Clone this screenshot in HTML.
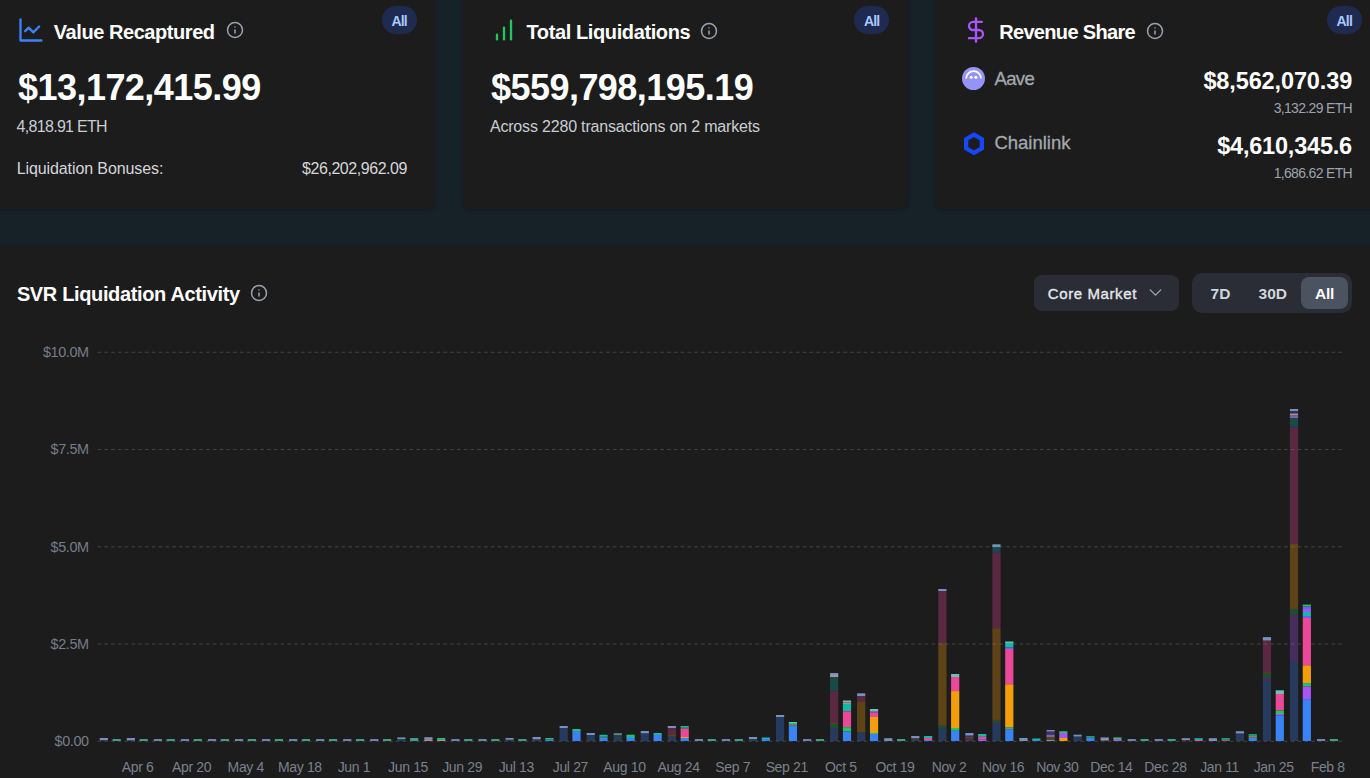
<!DOCTYPE html>
<html><head><meta charset="utf-8"><style>
html,body{margin:0;padding:0;}
body{width:1370px;height:778px;overflow:hidden;position:relative;background:#172228;font-family:"Liberation Sans", sans-serif;}
.abs{position:absolute;display:block;}
.t{position:absolute;white-space:nowrap;line-height:1;}
#cm{-webkit-text-stroke:0.35px #e5e7eb;}
#aave,#link{-webkit-text-stroke:0.3px #a3a8b0;}
.card{position:absolute;background:#1c1c1c;border-radius:8px;box-shadow:0 1px 4px rgba(0,0,0,0.28);}
.badge{position:absolute;background:#1e2a50;border-radius:14px;}
</style></head><body>
<div class="card" style="left:-10.2px;top:-20px;width:445px;height:228.5px"></div>
<div class="card" style="left:462.5px;top:-20px;width:445px;height:228.5px"></div>
<div class="card" style="left:935.3px;top:-20px;width:445px;height:228.5px"></div>
<div class="card" style="left:-11px;top:245px;width:1392px;height:560px;border-radius:8px"></div>
<div class="badge" style="left:381.5px;top:5.8px;width:35.4px;height:28px"></div>
<div class="badge" style="left:854px;top:5.8px;width:35.4px;height:28px"></div>
<div class="badge" style="left:1326.6px;top:5.8px;width:35.4px;height:28px"></div>
<div class="abs" style="left:1034px;top:275px;width:145px;height:36px;background:#2a2d35;border-radius:8px"></div>
<div class="abs" style="left:1192.2px;top:272.6px;width:160.3px;height:40.4px;background:#2a2d35;border-radius:10px"></div>
<div class="abs" style="left:1301px;top:276.8px;width:46.7px;height:32.2px;background:#4b5260;border-radius:8px"></div>
<svg class="abs" style="left:0;top:0" width="1370" height="778" viewBox="0 0 1370 778"><line x1="97.6" x2="1342" y1="352.25" y2="352.25" stroke="#434343" stroke-width="1" stroke-dasharray="3.6 3.18"/><line x1="97.6" x2="1342" y1="449.5" y2="449.5" stroke="#434343" stroke-width="1" stroke-dasharray="3.6 3.18"/><line x1="97.6" x2="1342" y1="546.75" y2="546.75" stroke="#434343" stroke-width="1" stroke-dasharray="3.6 3.18"/><line x1="97.6" x2="1342" y1="644.0" y2="644.0" stroke="#434343" stroke-width="1" stroke-dasharray="3.6 3.18"/><line x1="97.6" x2="1342" y1="741.25" y2="741.25" stroke="#434343" stroke-width="1" stroke-dasharray="3.6 3.18"/><rect x="99.71" y="738.00" width="8.20" height="2.00" fill="#7591c0"/><rect x="99.71" y="740.00" width="8.20" height="1.00" fill="#a855f7" fill-opacity="0.3"/><rect x="112.54" y="739.00" width="8.20" height="2.00" fill="#3c9f86"/><rect x="126.76" y="738.00" width="8.20" height="2.30" fill="#7591c0"/><rect x="126.76" y="740.30" width="8.20" height="0.70" fill="#a855f7" fill-opacity="0.3"/><rect x="139.59" y="739.00" width="8.20" height="2.00" fill="#3c9f86"/><rect x="153.81" y="739.00" width="8.20" height="2.00" fill="#6a84ae"/><rect x="166.64" y="739.00" width="8.20" height="2.00" fill="#3c9f86"/><rect x="180.86" y="739.00" width="8.20" height="2.00" fill="#6a84ae"/><rect x="193.69" y="739.00" width="8.20" height="2.00" fill="#3c9f86"/><rect x="207.91" y="739.00" width="8.20" height="2.00" fill="#6a84ae"/><rect x="220.74" y="739.00" width="8.20" height="2.00" fill="#3c9f86"/><rect x="234.96" y="739.00" width="8.20" height="2.00" fill="#6a84ae"/><rect x="247.79" y="739.00" width="8.20" height="2.00" fill="#3c9f86"/><rect x="262.01" y="739.00" width="8.20" height="2.00" fill="#6a84ae"/><rect x="274.84" y="739.00" width="8.20" height="2.00" fill="#3c9f86"/><rect x="289.06" y="739.00" width="8.20" height="2.00" fill="#6a84ae"/><rect x="301.89" y="739.00" width="8.20" height="2.00" fill="#3c9f86"/><rect x="316.11" y="739.00" width="8.20" height="2.00" fill="#6a84ae"/><rect x="328.94" y="739.00" width="8.20" height="2.00" fill="#3c9f86"/><rect x="343.16" y="739.00" width="8.20" height="2.00" fill="#6a84ae"/><rect x="355.99" y="739.00" width="8.20" height="2.00" fill="#3c9f86"/><rect x="370.21" y="739.00" width="8.20" height="2.00" fill="#6a84ae"/><rect x="383.04" y="739.00" width="8.20" height="2.00" fill="#3c9f86"/><rect x="397.26" y="737.40" width="8.20" height="1.60" fill="#7591c0"/><rect x="397.26" y="739.00" width="8.20" height="1.50" fill="#14b8a6" fill-opacity="0.3"/><rect x="397.26" y="740.50" width="8.20" height="0.50" fill="#3b82f6" fill-opacity="0.3"/><rect x="410.09" y="738.00" width="8.20" height="3.00" fill="#3c9f86"/><rect x="424.31" y="737.20" width="8.20" height="2.00" fill="#7591c0"/><rect x="424.31" y="739.20" width="8.20" height="1.80" fill="#b08e9c"/><rect x="437.14" y="738.00" width="8.20" height="1.00" fill="#22c55e"/><rect x="437.14" y="739.00" width="8.20" height="1.00" fill="#3c9f86"/><rect x="437.14" y="740.00" width="8.20" height="1.00" fill="#b08e9c"/><rect x="451.36" y="739.00" width="8.20" height="2.00" fill="#6a84ae"/><rect x="464.19" y="739.00" width="8.20" height="2.00" fill="#3c9f86"/><rect x="478.41" y="739.00" width="8.20" height="2.00" fill="#6a84ae"/><rect x="491.24" y="739.00" width="8.20" height="2.00" fill="#3c9f86"/><rect x="505.46" y="738.00" width="8.20" height="1.70" fill="#7591c0"/><rect x="505.46" y="739.70" width="8.20" height="1.30" fill="#3b82f6" fill-opacity="0.3"/><rect x="518.29" y="739.00" width="8.20" height="2.00" fill="#3c9f86"/><rect x="532.51" y="737.00" width="8.20" height="2.30" fill="#7591c0"/><rect x="532.51" y="739.30" width="8.20" height="1.70" fill="#3b82f6" fill-opacity="0.3"/><rect x="545.34" y="738.00" width="8.20" height="1.50" fill="#22c55e"/><rect x="545.34" y="739.50" width="8.20" height="1.50" fill="#3b82f6"/><rect x="559.56" y="726.00" width="8.20" height="2.00" fill="#7591c0"/><rect x="559.56" y="728.00" width="8.20" height="13.00" fill="#3b82f6" fill-opacity="0.3"/><rect x="572.39" y="729.00" width="8.20" height="2.00" fill="#22c55e"/><rect x="572.39" y="731.00" width="8.20" height="10.00" fill="#3b82f6"/><rect x="586.61" y="733.00" width="8.20" height="2.00" fill="#7591c0"/><rect x="586.61" y="735.00" width="8.20" height="6.00" fill="#3b82f6" fill-opacity="0.3"/><rect x="599.44" y="734.80" width="8.20" height="1.70" fill="#14b8a6"/><rect x="599.44" y="736.50" width="8.20" height="1.00" fill="#22c55e"/><rect x="599.44" y="737.50" width="8.20" height="3.50" fill="#3b82f6"/><rect x="613.66" y="733.30" width="8.20" height="1.50" fill="#7591c0"/><rect x="613.66" y="734.80" width="8.20" height="1.80" fill="#22c55e" fill-opacity="0.3"/><rect x="613.66" y="736.60" width="8.20" height="4.40" fill="#3b82f6" fill-opacity="0.3"/><rect x="626.49" y="734.70" width="8.20" height="1.30" fill="#22c55e"/><rect x="626.49" y="736.00" width="8.20" height="2.00" fill="#14b8a6"/><rect x="626.49" y="738.00" width="8.20" height="3.00" fill="#3b82f6"/><rect x="640.71" y="731.00" width="8.20" height="2.30" fill="#7591c0"/><rect x="640.71" y="733.30" width="8.20" height="7.70" fill="#3b82f6" fill-opacity="0.3"/><rect x="653.54" y="733.00" width="8.20" height="2.00" fill="#14b8a6"/><rect x="653.54" y="735.00" width="8.20" height="6.00" fill="#3b82f6"/><rect x="667.76" y="726.00" width="8.20" height="2.00" fill="#7591c0"/><rect x="667.76" y="728.00" width="8.20" height="7.00" fill="#ec4899" fill-opacity="0.3"/><rect x="667.76" y="735.00" width="8.20" height="1.50" fill="#f59e0b" fill-opacity="0.3"/><rect x="667.76" y="736.50" width="8.20" height="4.50" fill="#3b82f6" fill-opacity="0.3"/><rect x="680.59" y="726.00" width="8.20" height="1.50" fill="#14b8a6"/><rect x="680.59" y="727.50" width="8.20" height="1.00" fill="#22c55e"/><rect x="680.59" y="728.50" width="8.20" height="8.50" fill="#ec4899"/><rect x="680.59" y="737.00" width="8.20" height="1.00" fill="#f59e0b"/><rect x="680.59" y="738.00" width="8.20" height="3.00" fill="#3b82f6"/><rect x="694.81" y="739.00" width="8.20" height="2.00" fill="#6a84ae"/><rect x="707.64" y="739.00" width="8.20" height="2.00" fill="#3c9f86"/><rect x="721.86" y="739.00" width="8.20" height="2.00" fill="#6a84ae"/><rect x="734.69" y="739.00" width="8.20" height="2.00" fill="#3c9f86"/><rect x="748.91" y="737.00" width="8.20" height="2.00" fill="#7591c0"/><rect x="748.91" y="739.00" width="8.20" height="2.00" fill="#3b82f6" fill-opacity="0.3"/><rect x="761.74" y="737.50" width="8.20" height="1.50" fill="#14b8a6"/><rect x="761.74" y="739.00" width="8.20" height="2.00" fill="#3b82f6"/><rect x="775.96" y="715.00" width="8.20" height="2.00" fill="#7591c0"/><rect x="775.96" y="717.00" width="8.20" height="24.00" fill="#3b82f6" fill-opacity="0.3"/><rect x="788.79" y="722.00" width="8.20" height="1.00" fill="#6fbfb4"/><rect x="788.79" y="723.00" width="8.20" height="1.50" fill="#22c55e"/><rect x="788.79" y="724.50" width="8.20" height="0.70" fill="#f59e0b"/><rect x="788.79" y="725.20" width="8.20" height="15.80" fill="#3b82f6"/><rect x="803.01" y="739.00" width="8.20" height="2.00" fill="#6a84ae"/><rect x="815.84" y="739.00" width="8.20" height="2.00" fill="#3c9f86"/><rect x="830.06" y="673.00" width="8.20" height="2.00" fill="#7591c0"/><rect x="830.06" y="675.00" width="8.20" height="2.00" fill="#b08e9c"/><rect x="830.06" y="677.00" width="8.20" height="13.50" fill="#14b8a6" fill-opacity="0.3"/><rect x="830.06" y="690.50" width="8.20" height="1.00" fill="#6366f1" fill-opacity="0.3"/><rect x="830.06" y="691.50" width="8.20" height="31.50" fill="#ec4899" fill-opacity="0.3"/><rect x="830.06" y="723.00" width="8.20" height="1.00" fill="#f59e0b" fill-opacity="0.3"/><rect x="830.06" y="724.00" width="8.20" height="4.00" fill="#22c55e" fill-opacity="0.3"/><rect x="830.06" y="728.00" width="8.20" height="13.00" fill="#3b82f6" fill-opacity="0.3"/><rect x="842.89" y="700.50" width="8.20" height="2.00" fill="#6fbfb4"/><rect x="842.89" y="702.50" width="8.20" height="1.50" fill="#b08e9c"/><rect x="842.89" y="704.00" width="8.20" height="7.30" fill="#14b8a6"/><rect x="842.89" y="711.30" width="8.20" height="15.90" fill="#ec4899"/><rect x="842.89" y="727.20" width="8.20" height="4.40" fill="#22c55e"/><rect x="842.89" y="731.60" width="8.20" height="9.40" fill="#3b82f6"/><rect x="857.11" y="693.30" width="8.20" height="2.70" fill="#7591c0"/><rect x="857.11" y="696.00" width="8.20" height="6.00" fill="#ec4899" fill-opacity="0.3"/><rect x="857.11" y="702.00" width="8.20" height="30.30" fill="#f59e0b" fill-opacity="0.3"/><rect x="857.11" y="732.30" width="8.20" height="8.70" fill="#3b82f6" fill-opacity="0.3"/><rect x="869.94" y="709.00" width="8.20" height="2.50" fill="#6fbfb4"/><rect x="869.94" y="711.50" width="8.20" height="1.00" fill="#7591c0"/><rect x="869.94" y="712.50" width="8.20" height="4.50" fill="#ec4899"/><rect x="869.94" y="717.00" width="8.20" height="16.00" fill="#f59e0b"/><rect x="869.94" y="733.00" width="8.20" height="1.00" fill="#22c55e"/><rect x="869.94" y="734.00" width="8.20" height="7.00" fill="#3b82f6"/><rect x="884.16" y="738.20" width="8.20" height="2.80" fill="#7591c0"/><rect x="896.99" y="739.00" width="8.20" height="2.00" fill="#3c9f86"/><rect x="911.21" y="736.00" width="8.20" height="2.00" fill="#7591c0"/><rect x="911.21" y="738.00" width="8.20" height="1.00" fill="#f59e0b" fill-opacity="0.3"/><rect x="911.21" y="739.00" width="8.20" height="2.00" fill="#3b82f6" fill-opacity="0.3"/><rect x="924.04" y="736.00" width="8.20" height="2.00" fill="#14b8a6"/><rect x="924.04" y="738.00" width="8.20" height="2.00" fill="#ec4899"/><rect x="924.04" y="740.00" width="8.20" height="1.00" fill="#3b82f6"/><rect x="938.26" y="589.00" width="8.20" height="2.00" fill="#7591c0"/><rect x="938.26" y="591.00" width="8.20" height="52.20" fill="#ec4899" fill-opacity="0.3"/><rect x="938.26" y="643.20" width="8.20" height="82.40" fill="#f59e0b" fill-opacity="0.3"/><rect x="938.26" y="725.60" width="8.20" height="2.70" fill="#22c55e" fill-opacity="0.3"/><rect x="938.26" y="728.30" width="8.20" height="12.70" fill="#3b82f6" fill-opacity="0.3"/><rect x="951.09" y="674.00" width="8.20" height="3.00" fill="#6fbfb4"/><rect x="951.09" y="677.00" width="8.20" height="14.10" fill="#ec4899"/><rect x="951.09" y="691.10" width="8.20" height="36.90" fill="#f59e0b"/><rect x="951.09" y="728.00" width="8.20" height="2.80" fill="#22c55e"/><rect x="951.09" y="730.80" width="8.20" height="10.20" fill="#3b82f6"/><rect x="965.31" y="733.00" width="8.20" height="2.50" fill="#7591c0"/><rect x="965.31" y="735.50" width="8.20" height="1.50" fill="#a855f7" fill-opacity="0.3"/><rect x="965.31" y="737.00" width="8.20" height="1.50" fill="#f59e0b" fill-opacity="0.3"/><rect x="965.31" y="738.50" width="8.20" height="2.50" fill="#a855f7" fill-opacity="0.3"/><rect x="978.14" y="734.00" width="8.20" height="2.80" fill="#14b8a6"/><rect x="978.14" y="736.80" width="8.20" height="2.40" fill="#ec4899"/><rect x="978.14" y="739.20" width="8.20" height="1.80" fill="#a855f7"/><rect x="992.36" y="544.30" width="8.20" height="2.70" fill="#7591c0"/><rect x="992.36" y="547.00" width="8.20" height="4.00" fill="#14b8a6" fill-opacity="0.3"/><rect x="992.36" y="551.00" width="8.20" height="2.00" fill="#6366f1" fill-opacity="0.3"/><rect x="992.36" y="553.00" width="8.20" height="75.50" fill="#ec4899" fill-opacity="0.3"/><rect x="992.36" y="628.50" width="8.20" height="91.40" fill="#f59e0b" fill-opacity="0.3"/><rect x="992.36" y="719.90" width="8.20" height="2.60" fill="#22c55e" fill-opacity="0.3"/><rect x="992.36" y="722.50" width="8.20" height="1.50" fill="#a855f7" fill-opacity="0.3"/><rect x="992.36" y="724.00" width="8.20" height="17.00" fill="#3b82f6" fill-opacity="0.3"/><rect x="1005.19" y="641.50" width="8.20" height="1.50" fill="#6fbfb4"/><rect x="1005.19" y="643.00" width="8.20" height="4.50" fill="#14b8a6"/><rect x="1005.19" y="647.50" width="8.20" height="1.50" fill="#6366f1"/><rect x="1005.19" y="649.00" width="8.20" height="35.30" fill="#ec4899"/><rect x="1005.19" y="684.30" width="8.20" height="42.90" fill="#f59e0b"/><rect x="1005.19" y="727.20" width="8.20" height="2.10" fill="#22c55e"/><rect x="1005.19" y="729.30" width="8.20" height="0.70" fill="#a855f7"/><rect x="1005.19" y="730.00" width="8.20" height="11.00" fill="#3b82f6"/><rect x="1019.41" y="738.00" width="8.20" height="3.00" fill="#7591c0"/><rect x="1032.24" y="738.50" width="8.20" height="1.50" fill="#14b8a6"/><rect x="1032.24" y="740.00" width="8.20" height="1.00" fill="#3b82f6"/><rect x="1046.46" y="730.00" width="8.20" height="1.50" fill="#7591c0"/><rect x="1046.46" y="731.50" width="8.20" height="3.20" fill="#a855f7" fill-opacity="0.3"/><rect x="1046.46" y="734.70" width="8.20" height="2.40" fill="#7a62b0"/><rect x="1046.46" y="737.10" width="8.20" height="2.90" fill="#f59e0b" fill-opacity="0.3"/><rect x="1046.46" y="740.00" width="8.20" height="1.00" fill="#7591c0"/><rect x="1059.29" y="731.20" width="8.20" height="1.80" fill="#22c55e"/><rect x="1059.29" y="733.00" width="8.20" height="5.00" fill="#a855f7"/><rect x="1059.29" y="738.00" width="8.20" height="3.00" fill="#f59e0b"/><rect x="1073.51" y="734.70" width="8.20" height="1.80" fill="#7591c0"/><rect x="1073.51" y="736.50" width="8.20" height="4.50" fill="#3b82f6" fill-opacity="0.3"/><rect x="1086.34" y="736.20" width="8.20" height="1.30" fill="#22c55e"/><rect x="1086.34" y="737.50" width="8.20" height="3.50" fill="#3b82f6"/><rect x="1100.56" y="737.40" width="8.20" height="1.60" fill="#7591c0"/><rect x="1100.56" y="739.00" width="8.20" height="1.50" fill="#b08e9c"/><rect x="1100.56" y="740.50" width="8.20" height="0.50" fill="#3b82f6" fill-opacity="0.3"/><rect x="1113.39" y="737.40" width="8.20" height="1.60" fill="#22c55e"/><rect x="1113.39" y="739.00" width="8.20" height="2.00" fill="#a855f7"/><rect x="1127.61" y="739.00" width="8.20" height="2.00" fill="#6a84ae"/><rect x="1140.44" y="739.00" width="8.20" height="2.00" fill="#3c9f86"/><rect x="1154.66" y="739.00" width="8.20" height="2.00" fill="#6a84ae"/><rect x="1167.49" y="739.00" width="8.20" height="2.00" fill="#3c9f86"/><rect x="1181.71" y="738.20" width="8.20" height="1.80" fill="#7591c0"/><rect x="1181.71" y="740.00" width="8.20" height="1.00" fill="#ec4899" fill-opacity="0.3"/><rect x="1194.54" y="738.20" width="8.20" height="1.80" fill="#14b8a6"/><rect x="1194.54" y="740.00" width="8.20" height="1.00" fill="#ec4899"/><rect x="1208.76" y="738.20" width="8.20" height="2.80" fill="#7591c0"/><rect x="1221.59" y="738.20" width="8.20" height="1.30" fill="#14b8a6"/><rect x="1221.59" y="739.50" width="8.20" height="0.80" fill="#22c55e"/><rect x="1221.59" y="740.30" width="8.20" height="0.70" fill="#ec4899"/><rect x="1235.81" y="731.20" width="8.20" height="2.30" fill="#7591c0"/><rect x="1235.81" y="733.50" width="8.20" height="1.00" fill="#6366f1" fill-opacity="0.3"/><rect x="1235.81" y="734.50" width="8.20" height="6.50" fill="#3b82f6" fill-opacity="0.3"/><rect x="1248.64" y="734.20" width="8.20" height="1.30" fill="#14b8a6"/><rect x="1248.64" y="735.50" width="8.20" height="1.00" fill="#22c55e"/><rect x="1248.64" y="736.50" width="8.20" height="1.00" fill="#f59e0b"/><rect x="1248.64" y="737.50" width="8.20" height="3.50" fill="#3b82f6"/><rect x="1262.86" y="637.10" width="8.20" height="3.40" fill="#7591c0"/><rect x="1262.86" y="640.50" width="8.20" height="31.90" fill="#ec4899" fill-opacity="0.3"/><rect x="1262.86" y="672.40" width="8.20" height="1.10" fill="#f59e0b" fill-opacity="0.3"/><rect x="1262.86" y="673.50" width="8.20" height="4.50" fill="#22c55e" fill-opacity="0.3"/><rect x="1262.86" y="678.00" width="8.20" height="3.00" fill="#a855f7" fill-opacity="0.3"/><rect x="1262.86" y="681.00" width="8.20" height="60.00" fill="#3b82f6" fill-opacity="0.3"/><rect x="1275.69" y="690.30" width="8.20" height="3.70" fill="#6fbfb4"/><rect x="1275.69" y="694.00" width="8.20" height="16.60" fill="#ec4899"/><rect x="1275.69" y="710.60" width="8.20" height="3.40" fill="#22c55e"/><rect x="1275.69" y="714.00" width="8.20" height="1.50" fill="#a855f7"/><rect x="1275.69" y="715.50" width="8.20" height="25.50" fill="#3b82f6"/><rect x="1289.91" y="409.00" width="8.20" height="2.00" fill="#7591c0"/><rect x="1289.91" y="411.00" width="8.20" height="2.50" fill="#6366f1" fill-opacity="0.3"/><rect x="1289.91" y="413.50" width="8.20" height="2.00" fill="#b08e9c"/><rect x="1289.91" y="415.50" width="8.20" height="2.50" fill="#7a62b0"/><rect x="1289.91" y="418.00" width="8.20" height="8.00" fill="#14b8a6" fill-opacity="0.3"/><rect x="1289.91" y="426.00" width="8.20" height="2.00" fill="#6366f1" fill-opacity="0.3"/><rect x="1289.91" y="428.00" width="8.20" height="116.00" fill="#ec4899" fill-opacity="0.3"/><rect x="1289.91" y="544.00" width="8.20" height="65.20" fill="#f59e0b" fill-opacity="0.3"/><rect x="1289.91" y="609.20" width="8.20" height="5.40" fill="#22c55e" fill-opacity="0.3"/><rect x="1289.91" y="614.60" width="8.20" height="47.40" fill="#a855f7" fill-opacity="0.3"/><rect x="1289.91" y="662.00" width="8.20" height="79.00" fill="#3b82f6" fill-opacity="0.3"/><rect x="1302.74" y="604.60" width="8.20" height="1.90" fill="#22c55e"/><rect x="1302.74" y="606.50" width="8.20" height="2.50" fill="#6366f1"/><rect x="1302.74" y="609.00" width="8.20" height="3.00" fill="#a855f7"/><rect x="1302.74" y="612.00" width="8.20" height="4.00" fill="#14b8a6"/><rect x="1302.74" y="616.00" width="8.20" height="2.00" fill="#6366f1"/><rect x="1302.74" y="618.00" width="8.20" height="47.30" fill="#ec4899"/><rect x="1302.74" y="665.30" width="8.20" height="17.80" fill="#f59e0b"/><rect x="1302.74" y="683.10" width="8.20" height="3.30" fill="#22c55e"/><rect x="1302.74" y="686.40" width="8.20" height="12.70" fill="#a855f7"/><rect x="1302.74" y="699.10" width="8.20" height="41.90" fill="#3b82f6"/><rect x="1316.96" y="739.00" width="8.20" height="2.00" fill="#6a84ae"/><rect x="1329.79" y="739.00" width="8.20" height="2.00" fill="#3c9f86"/></svg>
<svg class="abs" style="left:17px;top:16.3px" width="28" height="28" viewBox="0 0 24 24" fill="none" stroke="#3b82f6" stroke-width="2" stroke-linecap="round" stroke-linejoin="round"><path d="M3 3v18h18"/><path d="m19 9-5 5-4-4-3 3"/></svg><svg class="abs" style="left:489.6px;top:16.4px" width="28" height="28" viewBox="0 0 24 24" fill="none" stroke="#22c55e" stroke-width="2" stroke-linecap="round" stroke-linejoin="round"><line x1="12" x2="12" y1="20" y2="10"/><line x1="18" x2="18" y1="20" y2="4"/><line x1="6" x2="6" y1="20" y2="16"/></svg><svg class="abs" style="left:962px;top:15.8px" width="28" height="28" viewBox="0 0 24 24" fill="none" stroke="#a855f7" stroke-width="2" stroke-linecap="round" stroke-linejoin="round"><line x1="12" x2="12" y1="2" y2="22"/><path d="M17 5H9.5a3.5 3.5 0 0 0 0 7h5a3.5 3.5 0 0 1 0 7H6"/></svg><svg class="abs" style="left:225.80px;top:21.40px" width="18" height="18" viewBox="0 0 24 24" fill="none" stroke="#9ca3af" stroke-width="2" stroke-linecap="round" stroke-linejoin="round"><circle cx="12" cy="12" r="10"/><path d="M12 16v-4"/><path d="M12 8h.01"/></svg><svg class="abs" style="left:700.40px;top:22.00px" width="18" height="18" viewBox="0 0 24 24" fill="none" stroke="#9ca3af" stroke-width="2" stroke-linecap="round" stroke-linejoin="round"><circle cx="12" cy="12" r="10"/><path d="M12 16v-4"/><path d="M12 8h.01"/></svg><svg class="abs" style="left:1145.50px;top:22.00px" width="18" height="18" viewBox="0 0 24 24" fill="none" stroke="#9ca3af" stroke-width="2" stroke-linecap="round" stroke-linejoin="round"><circle cx="12" cy="12" r="10"/><path d="M12 16v-4"/><path d="M12 8h.01"/></svg><svg class="abs" style="left:250.20px;top:284.00px" width="18" height="18" viewBox="0 0 24 24" fill="none" stroke="#9ca3af" stroke-width="2" stroke-linecap="round" stroke-linejoin="round"><circle cx="12" cy="12" r="10"/><path d="M12 16v-4"/><path d="M12 8h.01"/></svg><svg class="abs" style="left:962px;top:67px" width="23" height="23" viewBox="0 0 23 23"><circle cx="11.5" cy="11.5" r="11.5" fill="#9592f8"/><path d="M4.1 11.6a7.5 7.5 0 0 1 15 0" fill="none" stroke="#fff" stroke-width="1.85"/><circle cx="9.2" cy="10.3" r="1.5" fill="#fff"/><circle cx="13.9" cy="10.3" r="1.5" fill="#fff"/></svg><svg class="abs" style="left:962.7px;top:131.7px" width="22" height="23.5" viewBox="0 0 22 23.5"><polygon points="11,2.7 18.85,7.22 18.85,16.28 11,20.81 3.15,16.28 3.15,7.22" fill="none" stroke="#1448fa" stroke-width="4.3" stroke-linejoin="miter"/></svg><svg class="abs" style="left:1144.8px;top:282.3px" width="21" height="21" viewBox="0 0 24 24" fill="none" stroke="#9ca3af" stroke-width="1.6" stroke-linecap="round" stroke-linejoin="round"><path d="m6 9 6 6 6-6"/></svg>
<div class="t" id="t1" style="top:21.67px;font-size:20px;font-weight:700;color:#ffffff;letter-spacing:-0.44px;left:53.80px;">Value Recaptured</div>
<div class="t" id="t2" style="top:21.97px;font-size:20px;font-weight:700;color:#ffffff;letter-spacing:-0.39px;left:526.50px;">Total Liquidations</div>
<div class="t" id="t3" style="top:21.67px;font-size:20px;font-weight:700;color:#ffffff;letter-spacing:-0.67px;left:999.20px;">Revenue Share</div>
<div class="t" id="n1" style="top:69.63px;font-size:36px;font-weight:700;color:#ffffff;letter-spacing:-0.54px;left:18.00px;">$13,172,415.99</div>
<div class="t" id="s1" style="top:118.56px;font-size:16px;font-weight:400;color:#c9cdd3;letter-spacing:-0.7px;left:16.60px;">4,818.91 ETH</div>
<div class="t" id="lb" style="top:160.86px;font-size:16px;font-weight:400;color:#d4d6da;letter-spacing:-0.1px;left:16.70px;">Liquidation Bonuses:</div>
<div class="t" id="lv" style="top:160.86px;font-size:16px;font-weight:400;color:#d4d6da;letter-spacing:-0.45px;right:963.00px;">$26,202,962.09</div>
<div class="t" id="n2" style="top:69.63px;font-size:36px;font-weight:700;color:#ffffff;letter-spacing:-0.54px;left:491.00px;">$559,798,195.19</div>
<div class="t" id="s2" style="top:118.66px;font-size:16px;font-weight:400;color:#c9cdd3;letter-spacing:-0.18px;left:489.90px;">Across 2280 transactions on 2 markets</div>
<div class="t" id="aave" style="top:70.14px;font-size:18.5px;font-weight:400;color:#a3a8b0;letter-spacing:-0.6px;left:994.40px;">Aave</div>
<div class="t" id="link" style="top:134.34px;font-size:18.5px;font-weight:400;color:#a3a8b0;left:994.40px;">Chainlink</div>
<div class="t" id="av" style="top:70.41px;font-size:23.5px;font-weight:700;color:#ffffff;letter-spacing:-0.12px;right:17.90px;">$8,562,070.39</div>
<div class="t" id="ae" style="top:101.45px;font-size:14px;font-weight:400;color:#9ca3af;letter-spacing:-0.67px;right:18.00px;">3,132.29 ETH</div>
<div class="t" id="cv" style="top:135.01px;font-size:23.5px;font-weight:700;color:#ffffff;letter-spacing:-0.2px;right:18.00px;">$4,610,345.6</div>
<div class="t" id="ce" style="top:165.85px;font-size:14px;font-weight:400;color:#9ca3af;letter-spacing:-0.67px;right:18.00px;">1,686.62 ETH</div>
<div class="t" id="svr" style="top:284.07px;font-size:20px;font-weight:700;color:#ffffff;letter-spacing:-0.36px;left:16.90px;">SVR Liquidation Activity</div>
<div class="t" id="cm" style="top:285.80px;font-size:15px;font-weight:400;color:#e5e7eb;letter-spacing:0.6px;left:1047.80px;">Core Market</div>
<div class="t" id="d7" style="top:286.08px;font-size:15.5px;font-weight:700;color:#d1d5db;left:1210.60px;">7D</div>
<div class="t" id="d30" style="top:286.08px;font-size:15.5px;font-weight:700;color:#d1d5db;left:1258.60px;">30D</div>
<div class="t" id="dall" style="top:286.08px;font-size:15.5px;font-weight:700;color:#ffffff;letter-spacing:-0.3px;left:1315.00px;">All</div>
<div class="t" id="b1" style="top:13.95px;font-size:14px;font-weight:700;color:#a9c7ff;letter-spacing:-0.8px;left:399.20px;transform:translateX(-50%);">All</div>
<div class="t" id="b2" style="top:13.95px;font-size:14px;font-weight:700;color:#a9c7ff;letter-spacing:-0.8px;left:871.70px;transform:translateX(-50%);">All</div>
<div class="t" id="b3" style="top:13.95px;font-size:14px;font-weight:700;color:#a9c7ff;letter-spacing:-0.8px;left:1344.30px;transform:translateX(-50%);">All</div>
<div class="t" id="y0" style="top:345.01px;font-size:14.4px;font-weight:400;color:#767d88;letter-spacing:-0.4px;right:1281.40px;">$10.0M</div>
<div class="t" id="y1" style="top:442.31px;font-size:14.4px;font-weight:400;color:#767d88;letter-spacing:-0.4px;right:1281.40px;">$7.5M</div>
<div class="t" id="y2" style="top:539.51px;font-size:14.4px;font-weight:400;color:#767d88;letter-spacing:-0.4px;right:1281.40px;">$5.0M</div>
<div class="t" id="y3" style="top:636.81px;font-size:14.4px;font-weight:400;color:#767d88;letter-spacing:-0.4px;right:1281.40px;">$2.5M</div>
<div class="t" id="y4" style="top:734.31px;font-size:14.4px;font-weight:400;color:#767d88;letter-spacing:-0.4px;right:1281.40px;">$0.00</div>
<div class="t" id="x0" style="top:759.65px;font-size:14px;font-weight:400;color:#7a818c;letter-spacing:-0.35px;left:137.57px;transform:translateX(-50%);">Apr 6</div>
<div class="t" id="x1" style="top:759.65px;font-size:14px;font-weight:400;color:#7a818c;letter-spacing:-0.35px;left:191.68px;transform:translateX(-50%);">Apr 20</div>
<div class="t" id="x2" style="top:759.65px;font-size:14px;font-weight:400;color:#7a818c;letter-spacing:-0.35px;left:245.78px;transform:translateX(-50%);">May 4</div>
<div class="t" id="x3" style="top:759.65px;font-size:14px;font-weight:400;color:#7a818c;letter-spacing:-0.35px;left:299.88px;transform:translateX(-50%);">May 18</div>
<div class="t" id="x4" style="top:759.65px;font-size:14px;font-weight:400;color:#7a818c;letter-spacing:-0.35px;left:353.98px;transform:translateX(-50%);">Jun 1</div>
<div class="t" id="x5" style="top:759.65px;font-size:14px;font-weight:400;color:#7a818c;letter-spacing:-0.35px;left:408.07px;transform:translateX(-50%);">Jun 15</div>
<div class="t" id="x6" style="top:759.65px;font-size:14px;font-weight:400;color:#7a818c;letter-spacing:-0.35px;left:462.18px;transform:translateX(-50%);">Jun 29</div>
<div class="t" id="x7" style="top:759.65px;font-size:14px;font-weight:400;color:#7a818c;letter-spacing:-0.35px;left:516.28px;transform:translateX(-50%);">Jul 13</div>
<div class="t" id="x8" style="top:759.65px;font-size:14px;font-weight:400;color:#7a818c;letter-spacing:-0.35px;left:570.38px;transform:translateX(-50%);">Jul 27</div>
<div class="t" id="x9" style="top:759.65px;font-size:14px;font-weight:400;color:#7a818c;letter-spacing:-0.35px;left:624.48px;transform:translateX(-50%);">Aug 10</div>
<div class="t" id="x10" style="top:759.65px;font-size:14px;font-weight:400;color:#7a818c;letter-spacing:-0.35px;left:678.58px;transform:translateX(-50%);">Aug 24</div>
<div class="t" id="x11" style="top:759.65px;font-size:14px;font-weight:400;color:#7a818c;letter-spacing:-0.35px;left:732.68px;transform:translateX(-50%);">Sep 7</div>
<div class="t" id="x12" style="top:759.65px;font-size:14px;font-weight:400;color:#7a818c;letter-spacing:-0.35px;left:786.77px;transform:translateX(-50%);">Sep 21</div>
<div class="t" id="x13" style="top:759.65px;font-size:14px;font-weight:400;color:#7a818c;letter-spacing:-0.35px;left:840.88px;transform:translateX(-50%);">Oct 5</div>
<div class="t" id="x14" style="top:759.65px;font-size:14px;font-weight:400;color:#7a818c;letter-spacing:-0.35px;left:894.98px;transform:translateX(-50%);">Oct 19</div>
<div class="t" id="x15" style="top:759.65px;font-size:14px;font-weight:400;color:#7a818c;letter-spacing:-0.35px;left:949.08px;transform:translateX(-50%);">Nov 2</div>
<div class="t" id="x16" style="top:759.65px;font-size:14px;font-weight:400;color:#7a818c;letter-spacing:-0.35px;left:1003.18px;transform:translateX(-50%);">Nov 16</div>
<div class="t" id="x17" style="top:759.65px;font-size:14px;font-weight:400;color:#7a818c;letter-spacing:-0.35px;left:1057.28px;transform:translateX(-50%);">Nov 30</div>
<div class="t" id="x18" style="top:759.65px;font-size:14px;font-weight:400;color:#7a818c;letter-spacing:-0.35px;left:1111.38px;transform:translateX(-50%);">Dec 14</div>
<div class="t" id="x19" style="top:759.65px;font-size:14px;font-weight:400;color:#7a818c;letter-spacing:-0.35px;left:1165.48px;transform:translateX(-50%);">Dec 28</div>
<div class="t" id="x20" style="top:759.65px;font-size:14px;font-weight:400;color:#7a818c;letter-spacing:-0.35px;left:1219.58px;transform:translateX(-50%);">Jan 11</div>
<div class="t" id="x21" style="top:759.65px;font-size:14px;font-weight:400;color:#7a818c;letter-spacing:-0.35px;left:1273.67px;transform:translateX(-50%);">Jan 25</div>
<div class="t" id="x22" style="top:759.65px;font-size:14px;font-weight:400;color:#7a818c;letter-spacing:-0.35px;left:1327.78px;transform:translateX(-50%);">Feb 8</div>
</body></html>
